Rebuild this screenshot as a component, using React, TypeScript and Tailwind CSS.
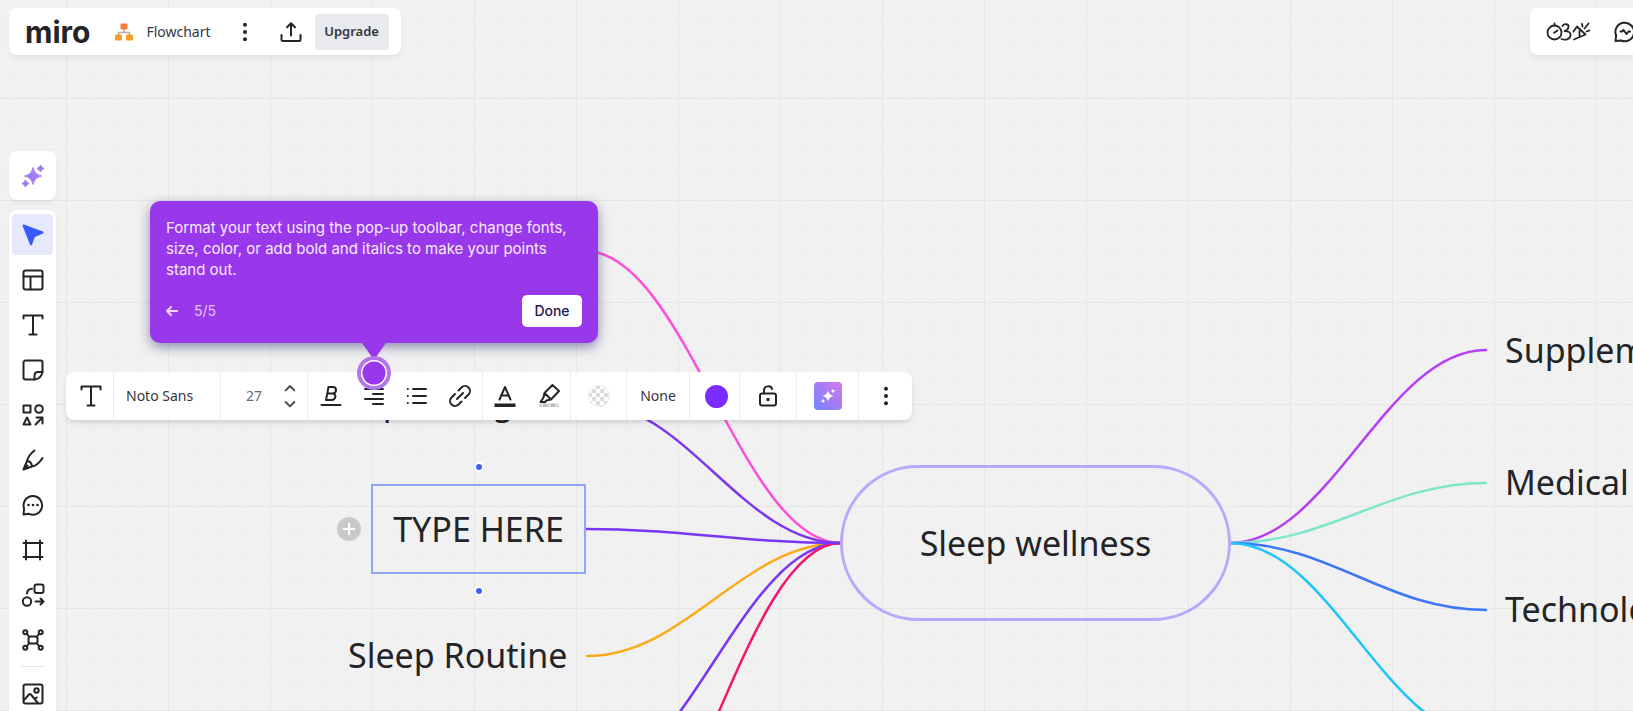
import type { ReactNode } from "react"

interface IconProps {
    children: ReactNode
    className?: string
}

const Icon = ({ children, className = "h-6 w-6" }: IconProps) => {
    return (
        <svg
            viewBox="0 0 24 24"
            fill="none"
            stroke="currentColor"
            strokeWidth="2"
            strokeLinecap="round"
            strokeLinejoin="round"
            aria-hidden="true"
            className={`shrink-0 ${className}`}
        >
            {children}
        </svg>
    )
}

const TextIcon = () => (
    <Icon>
        <path d="M2.500 5.500v-3h19v3M12 2.500v19M8.500 21.500h7" />
    </Icon>
)

const DotsIcon = () => (
    <Icon>
        <g fill="currentColor" stroke="none">
            <circle cx="12" cy="4.800" r="2" />
            <circle cx="12" cy="12" r="2" />
            <circle cx="12" cy="19.200" r="2" />
        </g>
    </Icon>
)

const SparkleShapes = () => (
    <>
        <path d="M12 3.500c1.300 5 3 7 8.500 8.500-5.500 1.500-7.200 3.500-8.500 8.500-1.300-5-3-7-8.500-8.500C9 10.500 10.700 8.500 12 3.500z" />
        <path d="M19.500 1l1.300 2.200L23 4.500l-2.200 1.300L19.500 8l-1.300-2.200L16 4.500l2.200-1.300z" />
        <path d="M4.500 16l1.300 2.200L8 19.500l-2.200 1.300L4.500 23l-1.300-2.200L1 19.500l2.200-1.300z" />
    </>
)

interface Tool {
    label: string
    icon: ReactNode
}

const tools: Tool[] = [
    {
        label: "Select",
        icon: (
            <Icon className="h-6 w-6 text-[#3859ff]">
                <path d="M2.500 2.500l19 7-8.500 3.800-3 8z" fill="currentColor" />
            </Icon>
        ),
    },
    {
        label: "Templates",
        icon: (
            <Icon>
                <rect x="2.500" y="2.500" width="19" height="19" rx="2" />
                <path d="M2.500 8.500h19M9.500 8.500v13" />
            </Icon>
        ),
    },
    { label: "Text", icon: <TextIcon /> },
    {
        label: "Sticky note",
        icon: (
            <Icon>
                <path d="M13.500 21.500h-9a2 2 0 0 1-2-2v-15a2 2 0 0 1 2-2h15a2 2 0 0 1 2 2v9c-.5 4.500-3.500 7.500-8 8z" />
                <path d="M13.500 21.500v-4c0-2.500 1-3.500 3.500-3.500h4.500" />
            </Icon>
        ),
    },
    {
        label: "Shapes",
        icon: (
            <Icon>
                <rect x="2.500" y="2.500" width="7" height="7" />
                <circle cx="18" cy="6" r="3.800" />
                <path d="M6 14.500l3.500 7h-7zM14.500 21.500l7-7M15.500 14.500h6v6" />
            </Icon>
        ),
    },
    {
        label: "Pen",
        icon: (
            <Icon>
                <path d="M13.500 2.500C9 6 7 9 6 13L2.500 21.500 11 18.500c5-1 8-4.500 10.500-8.500M6 13c3 .3 4.700 2 5 5.500M2.500 21.500l4-4" />
            </Icon>
        ),
    },
    {
        label: "Comment",
        icon: (
            <Icon>
                <path d="M2.500 21.500l.6-6A9.300 9.300 0 1 1 8 20.800z" />
                <g fill="currentColor" stroke="none">
                    <circle cx="7.500" cy="12" r="1.300" />
                    <circle cx="12" cy="12" r="1.300" />
                    <circle cx="16.500" cy="12" r="1.300" />
                </g>
            </Icon>
        ),
    },
    {
        label: "Frame",
        icon: (
            <Icon>
                <path d="M5 2.500v19M19 2.500v19M2.500 5h19M2.500 19h19" />
            </Icon>
        ),
    },
    {
        label: "Diagramming",
        icon: (
            <Icon>
                <rect x="13.500" y="1.500" width="9" height="8.500" rx="2" />
                <circle cx="6" cy="18.500" r="4.200" />
                <path d="M6 10.500c.2-3 1.500-4.500 5-4.700M14.500 18.500h8M19.500 15.500l3 3-3 3" />
            </Icon>
        ),
    },
    {
        label: "Mind map",
        icon: (
            <Icon>
                <rect x="7.500" y="8.500" width="9" height="7" rx="2" />
                <circle cx="4.300" cy="4.300" r="2" />
                <circle cx="19.700" cy="4.300" r="2" />
                <circle cx="4.300" cy="19.700" r="2" />
                <circle cx="19.700" cy="19.700" r="2" />
                <path d="M6 6l2.300 3M18 6l-2.300 3M6 18l2.300-3M18 18l-2.300-3" />
            </Icon>
        ),
    },
]

const Header = () => {
    return (
        <header className="flex justify-between pt-2 pl-[9px]">
            <div className="flex h-[47px] items-center rounded-lg bg-white pr-3 pl-4 shadow-md shadow-black/5">
                <a href="#" className="font-['Inter',sans-serif] text-[30px] leading-8 font-bold">
                    miro
                </a>
                <button className="ml-6 flex items-center gap-3 text-sm text-[#33363d]">
                    <svg viewBox="0 0 20 20" aria-hidden="true" className="h-5 w-5">
                        <path d="M10 6v4M4.500 14v-3.500h11V14" fill="none" stroke="#b9b0a6" strokeWidth="1.500" />
                        <rect x="6.500" y="1.500" width="7" height="6" rx="1" fill="#f0803c" />
                        <rect x="1" y="12.500" width="7" height="6" rx="1" fill="#f5a02c" />
                        <rect x="12" y="12.500" width="7" height="6" rx="1" fill="#f5a02c" />
                    </svg>
                    Flowchart
                </button>
                <button aria-label="Board menu" className="ml-[22px]">
                    <DotsIcon />
                </button>
                <button aria-label="Export" className="ml-[22px]">
                    <Icon>
                        <path d="M2.500 15v4.500a1.500 1.500 0 0 0 1.500 1.500h16a1.500 1.500 0 0 0 1.500-1.500V15M12 15.500v-12M8 7.200l4-4 4 4" />
                    </Icon>
                </button>
                <button className="ml-3 h-9 w-[74px] rounded bg-[#e9eaef] text-[13px] font-semibold text-[#33363d]">
                    Upgrade
                </button>
            </div>

            <div className="flex h-[47px] w-[103px] items-center gap-[22px] overflow-hidden rounded-l-lg bg-white pl-4 shadow-md shadow-black/5">
                <button aria-label="Facilitation tools" className="shrink-0">
                    <svg
                        viewBox="0 0 46 24"
                        fill="none"
                        stroke="currentColor"
                        strokeWidth="1.800"
                        strokeLinecap="round"
                        strokeLinejoin="round"
                        aria-hidden="true"
                        className="h-6 w-[46px]"
                    >
                        <circle cx="8.500" cy="12.500" r="7" />
                        <path d="M8 12.800l3.500-2.300M8.500 3.500v1.500" />
                        <path d="M16.500 6c2-3 6.500-2 6 1-.2 2-2 3.500-4 4 4 0 6.500 1.500 6 4.500-.6 4-5.500 5-9 3.500" />
                        <path d="M28 19.500l11.500-5L31 6.500l-3.500 5M31 6.500l8.500 8M33.500 16v-5" />
                        <path d="M36.500 6.500l-.5-2.500M38.500 8.500l4-5M40.500 11.500l3-1" />
                    </svg>
                </button>
                <button aria-label="Activity" className="shrink-0">
                    <Icon>
                        <path d="M1.500 21l.6-5.500A9.300 9.300 0 1 1 7 20.500z" />
                        <path d="M6.500 11.500h1.500l1.500-1.500 3 4 2-2.500h1.500" />
                    </Icon>
                </button>
            </div>
        </header>
    )
}

const Sidebar = () => {
    return (
        <aside className="mt-24 ml-[9px] flex min-h-0 w-[47px] flex-1 flex-col gap-[10px]">
            <button
                aria-label="AI assistant"
                className="flex h-[49px] shrink-0 items-center justify-center rounded-lg bg-white shadow-md shadow-black/5"
            >
                <svg viewBox="0 0 24 24" aria-hidden="true" className="h-6 w-6">
                    <defs>
                        <linearGradient id="sparkle" x1="0" y1="1" x2="1" y2="0">
                            <stop offset="0" stopColor="#8f7bff" />
                            <stop offset="1" stopColor="#b57bec" />
                        </linearGradient>
                    </defs>
                    <g fill="url(#sparkle)" stroke="#a67cf3" strokeLinejoin="round">
                        <SparkleShapes />
                    </g>
                </svg>
            </button>
            <nav className="flex flex-1 flex-col items-center gap-1 rounded-t-lg bg-white pt-1 shadow-md shadow-black/5">
                {tools.map((tool, i) => (
                    <button
                        key={tool.label}
                        aria-label={tool.label}
                        className={`flex h-[41px] w-[41px] shrink-0 items-center justify-center rounded ${i === 0 ? "bg-[#e6e9fc]" : ""}`}
                    >
                        {tool.icon}
                    </button>
                ))}
                <hr className="my-[2px] w-6 border-t border-[#e4e5ea]" />
                <button aria-label="Image" className="flex h-[41px] w-[41px] shrink-0 items-center justify-center">
                    <Icon>
                        <rect x="2.500" y="2.500" width="19" height="19" rx="2" />
                        <circle cx="15.500" cy="8.500" r="2.200" />
                        <path d="M3 18l5-5.500c.6-.7 1.300-.7 1.900 0l7 8.500M14 17l1.800-1.500" />
                    </Icon>
                </button>
            </nav>
        </aside>
    )
}

// every branch leaves its node horizontally and flattens out again at the hub
const branch = (x1: number, y1: number, x2: number, y2: number) => {
    const bend = (x2 - x1) * 0.39
    return `M${x1} ${y1}C${x1 + bend} ${y1} ${x2 - bend} ${y2} ${x2} ${y2}`
}

const branches = [
    { color: "#ff4fd8", d: branch(585, 251, 841, 543) },
    { color: "#faab1a", d: branch(587, 656, 841, 543) },
    { color: "#7a35f5", d: branch(587, 780, 841, 543) },
    { color: "#f5146e", d: branch(587, 903, 841, 543) },
    { color: "#7a35f5", d: branch(587, 402, 841, 543) },
    { color: "#7a35f5", d: branch(585, 529, 841, 543) },
    { color: "#b63df5", d: branch(1230, 543, 1486, 350) },
    { color: "#7fe6cb", d: branch(1230, 543, 1486, 483) },
    { color: "#3d77f7", d: branch(1230, 543, 1486, 610) },
    { color: "#1fc4fb", d: branch(1230, 543, 1486, 737) },
]

const MindMap = () => {
    return (
        <div className="absolute inset-0 overflow-hidden text-[34px] leading-[46px] whitespace-nowrap">
            <svg className="absolute inset-0 h-full w-full" aria-hidden="true">
                <defs>
                    <pattern id="grid" x="66" y="98" width="102" height="102" patternUnits="userSpaceOnUse">
                        <path
                            d="M26 0v102M51 0v102M77 0v102M0 26h102M0 51h102M0 77h102"
                            stroke="#eeeeef"
                            strokeWidth="1"
                        />
                        <path d="M.5 0v102M0 .5h102" stroke="#e6e6e7" strokeWidth="1" />
                    </pattern>
                </defs>
                <rect width="100%" height="100%" fill="url(#grid)" />
                {branches.map((b) => (
                    <path key={b.d} d={b.d} fill="none" stroke={b.color} strokeWidth="2.500" strokeLinecap="round" />
                ))}
            </svg>

            <div className="absolute top-[465px] left-[840px] flex h-[156px] w-[391px] items-center justify-center rounded-full border-[3px] border-[#b7a9fb]">
                Sleep wellness
            </div>

            <div className="absolute top-[379px] left-[317px]">Sleep Eating</div>
            <div className="absolute top-[632px] left-[348px]">Sleep Routine</div>
            <div className="absolute top-[327px] left-[1505px]">Supplements</div>
            <div className="absolute top-[459px] left-[1505px]">Medical</div>
            <div className="absolute top-[586px] left-[1505px]">Technology</div>

            <div className="absolute top-[484px] left-[371px] flex h-[90px] w-[215px] items-center justify-center border-2 border-[#8fa5fa]">
                TYPE HERE
                <span className="absolute -top-[22px] h-[6px] w-[6px] rounded-full bg-[#3f5ffb] ring-2 ring-white" />
                <span className="absolute -bottom-[22px] h-[6px] w-[6px] rounded-full bg-[#3f5ffb] ring-2 ring-white" />
                <button
                    aria-label="Add branch"
                    className="absolute -left-[36px] flex h-6 w-6 items-center justify-center rounded-full bg-[#c9c9c9] text-white"
                >
                    <Icon className="h-4 w-4">
                        <path d="M12 4v16M4 12h16" strokeWidth="3" />
                    </Icon>
                </button>
            </div>
        </div>
    )
}

const FormatToolbar = () => {
    return (
        <div
            role="toolbar"
            aria-label="Text formatting"
            className="absolute top-[372px] left-[66px] flex h-12 divide-x divide-[#ececf0] rounded-lg bg-white text-sm shadow-md shadow-black/10"
        >
            <button aria-label="Switch type" className="flex w-12 items-center justify-center pl-[2px]">
                <TextIcon />
            </button>
            <div className="flex w-[107px] items-center">
                <select aria-label="Font" className="w-full appearance-none pl-3 text-[#33363d]">
                    <option>Noto Sans</option>
                </select>
            </div>
            <div className="flex w-[87px] items-center justify-between pr-[5px] pl-[21px]">
                <input aria-label="Font size" defaultValue="27" className="w-6 text-center text-[#656b75]" />
                <div className="flex flex-col text-[#4b4f57]">
                    <button aria-label="Increase size">
                        <Icon className="h-4 w-6">
                            <path d="M5.500 15.500l6.500-6.500 6.500 6.500" strokeWidth="3" />
                        </Icon>
                    </button>
                    <button aria-label="Decrease size">
                        <Icon className="h-4 w-6">
                            <path d="M5.500 9l6.500 6.500 6.500-6.500" strokeWidth="3" />
                        </Icon>
                    </button>
                </div>
            </div>
            <div className="flex w-[175px] items-center justify-center gap-[19px]">
                <button aria-label="Bold">
                    <Icon>
                        <path d="M9.500 3h4.500c4 0 4 6 0 6.500H8.300zM8.300 9.500h5c4.500 0 4 6.500-.8 6.500H7zM2.500 21h19" />
                    </Icon>
                </button>
                <button aria-label="Align">
                    <Icon>
                        <path d="M3 5h18M11 10h10M3 15h18M11 20h10" />
                    </Icon>
                </button>
                <button aria-label="List">
                    <Icon>
                        <path d="M8 5h13M8 12h13M8 19h13M2.800 5h.1M2.800 12h.1M2.800 19h.1" />
                    </Icon>
                </button>
                <button aria-label="Link">
                    <Icon>
                        <path d="M9 15l6-6M10.500 6.500l3-3a4.600 4.600 0 0 1 7 7l-3.500 3.500M13.500 17.500l-3 3a4.600 4.600 0 0 1-7-7L7 10" />
                    </Icon>
                </button>
            </div>
            <div className="flex w-[88px] items-center justify-center gap-5">
                <button aria-label="Text color">
                    <Icon>
                        <path d="M6.500 15.500L12 3l5.500 12.500M8.500 11.500h7" />
                        <path d="M1.500 19.500h21V23h-21z" fill="currentColor" stroke="none" />
                    </Icon>
                </button>
                <button aria-label="Highlight">
                    <Icon>
                        <path d="M2 19.500h20v3.500H2z" fill="#d9d9dc" stroke="none" />
                        <path d="M6 19.500h4v3.500H6zM14 19.500h4v3.500h-4z" fill="#bdbdc1" stroke="none" />
                        <path d="M15.500 1l6.500 6-8 8.500-6.500-6.500zM7.500 9l-1 4.500-3 4.500h4.500l1.500-1.500 4.500-1" />
                    </Icon>
                </button>
            </div>
            <button aria-label="Fill" className="flex w-14 items-center justify-center">
                <svg viewBox="0 0 22 22" aria-hidden="true" className="h-[22px] w-[22px]">
                    <defs>
                        <pattern id="checks" width="8" height="8" patternUnits="userSpaceOnUse">
                            <path d="M0 0h4v4H0zM4 4h4v4H4z" fill="#dbdbdd" />
                        </pattern>
                    </defs>
                    <circle cx="11" cy="11" r="10.500" fill="url(#checks)" stroke="#e9e9eb" />
                </svg>
            </button>
            <button className="w-[63px] text-[#33363d]">None</button>
            <button aria-label="Line color" className="flex w-[50px] items-center justify-center pl-1">
                <span className="h-[23px] w-[23px] rounded-full bg-[#7b2cff]" />
            </button>
            <button aria-label="Lock" className="flex w-[57px] items-center justify-center">
                <Icon>
                    <rect x="4" y="9.500" width="16" height="12" rx="2" />
                    <path d="M8 9.500V6.500c0-5 7-5.500 8-1.500" />
                    <path d="M10.500 14h3v3h-3z" fill="currentColor" stroke="none" />
                </Icon>
            </button>
            <button aria-label="AI actions" className="flex w-[62px] items-center justify-center">
                <span className="flex h-7 w-7 items-center justify-center rounded bg-linear-to-tr from-[#6f86ff] via-[#a47bf5] to-[#d878e6]">
                    <svg viewBox="0 0 24 24" fill="#ffffff" aria-hidden="true" className="h-4 w-4">
                        <SparkleShapes />
                    </svg>
                </span>
            </button>
            <button aria-label="More" className="flex w-[53px] items-center justify-center">
                <DotsIcon />
            </button>
        </div>
    )
}

const TourTip = () => {
    return (
        <div
            role="dialog"
            aria-label="Tour step"
            className="absolute top-[201px] left-[150px] w-[448px] rounded-[10px] bg-[#9938ea] p-4 font-['Inter',sans-serif] text-white shadow-[0_4px_12px_rgba(40,40,110,0.5)]"
        >
            <p className="text-[15px] leading-[21px] text-[#f7ebff]">
                Format your text using the pop-up toolbar, change fonts, size, color, or add bold and italics to make your
                points stand out.
            </p>
            <div className="mt-[15px] flex items-center gap-4 text-sm">
                <button aria-label="Previous step" className="text-[#ecd6ff]">
                    <svg
                        viewBox="0 0 12 12"
                        fill="none"
                        stroke="currentColor"
                        strokeWidth="2"
                        strokeLinecap="round"
                        strokeLinejoin="round"
                        aria-hidden="true"
                        className="h-3 w-3"
                    >
                        <path d="M11.500 6H1M5 2L1 6l4 4" />
                    </svg>
                </button>
                <span className="text-[#e3c6fb]">5/5</span>
                <button className="ml-auto h-8 w-[60px] rounded-[5px] bg-white font-medium text-[#1f1650]">Done</button>
            </div>
            <svg viewBox="0 0 34 48" aria-hidden="true" className="absolute top-[142px] left-[207px] h-12 w-[34px]">
                <path d="M5 0h24L17 17z" fill="#9938ea" />
                <circle cx="17" cy="30" r="17" fill="#b375ea" />
                <circle cx="17" cy="30" r="13" fill="#ffffff" />
                <circle cx="17" cy="30" r="11.500" fill="#9938ea" />
            </svg>
        </div>
    )
}

const App = () => {
    return (
        <div className="relative flex h-screen flex-col overflow-hidden bg-[#f1f1f1] font-['Noto_Sans',sans-serif] text-[#222428]">
            <MindMap />
            <div className="relative flex min-h-0 flex-1 flex-col">
                <Header />
                <Sidebar />
            </div>
            <FormatToolbar />
            <TourTip />
        </div>
    )
}

export default App
